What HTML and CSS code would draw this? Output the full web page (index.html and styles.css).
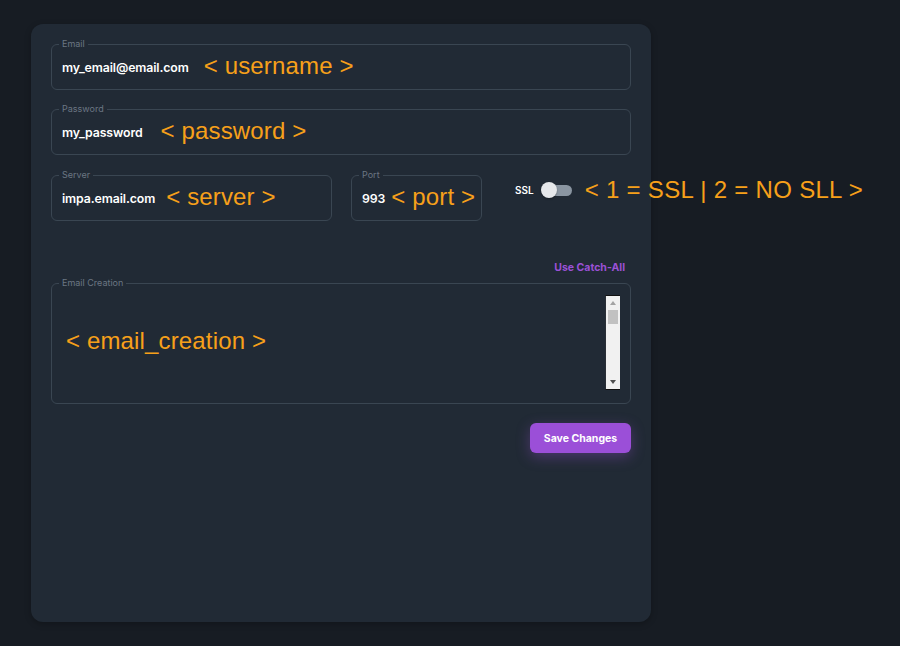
FILE: index.html
```html
<!DOCTYPE html>
<html lang="en">
<head>
<meta charset="utf-8">
<title>Email settings</title>
<link rel="stylesheet" href="styles.css">
</head>
<body>
<main class="panel">
  <form class="form">
    <fieldset class="field">
      <legend>Email</legend>
      <div class="value-row">
        <span class="value">my_email@email.com</span>
        <span class="note note-user">&lt; username &gt;</span>
      </div>
    </fieldset>
    <fieldset class="field">
      <legend>Password</legend>
      <div class="value-row">
        <span class="value">my_password</span>
        <span class="note note-pass">&lt; password &gt;</span>
      </div>
    </fieldset>
    <div class="server-row">
      <fieldset class="field server">
        <legend>Server</legend>
        <div class="value-row">
          <span class="value">impa.email.com</span>
          <span class="note note-server">&lt; server &gt;</span>
        </div>
      </fieldset>
      <fieldset class="field port">
        <legend>Port</legend>
        <div class="value-row">
          <span class="value">993</span>
          <span class="note note-port">&lt; port &gt;</span>
        </div>
      </fieldset>
      <div class="ssl">
        <span class="ssl-label">SSL</span>
        <span class="toggle"><span class="knob"></span></span>
        <span class="note note-ssl">&lt; 1 = SSL | 2 = NO SLL &gt;</span>
      </div>
    </div>
    <div class="catch-row"><a class="catch">Use Catch-All</a></div>
    <fieldset class="field creation">
      <legend>Email Creation</legend>
      <div class="creation-body">
        <span class="note note-creation">&lt; email_creation &gt;</span>
        <div class="scrollbar">
          <span class="arrow up"></span>
          <span class="thumb"></span>
          <span class="track"></span>
          <span class="arrow down"></span>
        </div>
      </div>
    </fieldset>
    <div class="actions"><button type="button" class="save">Save Changes</button></div>
  </form>
</main>
</body>
</html>
```
FILE: styles.css
```css
html, body {
  margin: 0;
  padding: 0;
  background: #171c23;
}
body {
  font-family: Inter, "Noto Sans", sans-serif;
  color: #ffffff;
  padding: 24px 0 0 31px;
  height: 646px;
  box-sizing: border-box;
  overflow: hidden;
}
.panel {
  width: 620px;
  height: 598px;
  box-sizing: border-box;
  background: #212a35;
  border-radius: 12px;
  padding: 15px 20px;
  box-shadow: 0 2px 6px rgba(0, 0, 0, 0.25);
}
.form {
  display: flex;
  flex-direction: column;
}
.field {
  margin: 0 0 14px 0;
  padding: 0 10px 3px 7px;
  border: 1px solid #3a4652;
  border-radius: 6px;
  min-width: 0;
}
.field legend {
  font-size: 9px;
  line-height: 10px;
  color: #6b7683;
  padding: 0 3px;
}
.value-row {
  height: 37px;
  display: flex;
  align-items: center;
  padding-left: 3px;
  white-space: nowrap;
}
.value {
  font-size: 12.3px;
  font-weight: 600;
  color: #ffffff;
  letter-spacing: -0.1px;
}
.note {
  font-family: "Liberation Sans", Arial, sans-serif;
  font-size: 24px;
  color: #f7a01a;
  white-space: nowrap;
  line-height: 28px;
  letter-spacing: 0.15px;
  margin-bottom: 3px;
}
.note-user { margin-left: 15px; }
.note-pass { margin-left: 18px; }
.note-server { margin-left: 11px; }
.note-port { margin-left: 6px; }
.server-row {
  display: flex;
  align-items: flex-start;
  margin-top: 1px;
}
.server {
  width: 281px;
  box-sizing: border-box;
  flex: none;
}
.port {
  width: 131px;
  box-sizing: border-box;
  flex: none;
  margin-left: 19px;
}
.ssl {
  display: flex;
  align-items: center;
  margin-left: 33px;
  margin-top: 6px;
  height: 28px;
  white-space: nowrap;
}
.ssl-label {
  font-size: 10px;
  font-weight: 600;
  color: #ffffff;
}
.toggle {
  position: relative;
  width: 31px;
  height: 16px;
  margin-left: 7px;
  display: inline-block;
}
.toggle::before {
  content: "";
  position: absolute;
  left: 4px;
  right: 0;
  top: 3px;
  height: 11px;
  border-radius: 6px;
  background: #8a95a1;
}
.knob {
  position: absolute;
  left: 0;
  top: 0;
  width: 16px;
  height: 16px;
  border-radius: 50%;
  background: #e6e8eb;
  box-shadow: 0 1px 2px rgba(0, 0, 0, 0.3);
}
.note-ssl {
  margin-left: 13px;
  letter-spacing: 0.3px;
  margin-bottom: 1px;
}
.catch-row {
  display: flex;
  justify-content: flex-end;
  padding-right: 6px;
  margin-top: 26px;
  margin-bottom: 3px;
}
.catch {
  font-size: 10.5px;
  font-weight: 700;
  line-height: 14px;
  color: #9b51d6;
  cursor: pointer;
}
.creation {
  padding: 7px 10px 13px 7px;
  margin-bottom: 19px;
}
.creation-body {
  display: flex;
  align-items: center;
  height: 95px;
}
.note-creation {
  margin-left: 7px;
  flex: 1;
}
.scrollbar {
  width: 15px;
  height: 95px;
  box-sizing: border-box;
  background: #f1f1f1;
  border-top: 1px solid #111;
  border-bottom: 1px solid #111;
  border-left: 1px solid #2a2f36;
  display: flex;
  flex-direction: column;
  align-items: center;
}
.arrow {
  width: 0;
  height: 0;
  border-left: 3.5px solid transparent;
  border-right: 3.5px solid transparent;
  margin: 5px 0;
  flex: none;
}
.arrow.up {
  border-bottom: 4px solid #a3a3a3;
}
.arrow.down {
  border-top: 4px solid #505050;
}
.thumb {
  width: 10px;
  height: 14px;
  background: #c1c1c1;
  flex: none;
}
.track {
  flex: 1;
}
.actions {
  display: flex;
  justify-content: flex-end;
}
.save {
  width: 101px;
  height: 30px;
  border: none;
  border-radius: 6px;
  background: #9b4fd8;
  color: #ffffff;
  font-family: Inter, "Noto Sans", sans-serif;
  font-size: 10.5px;
  font-weight: 700;
  box-shadow: 0 4px 14px rgba(155, 79, 216, 0.35);
  cursor: pointer;
}
```
